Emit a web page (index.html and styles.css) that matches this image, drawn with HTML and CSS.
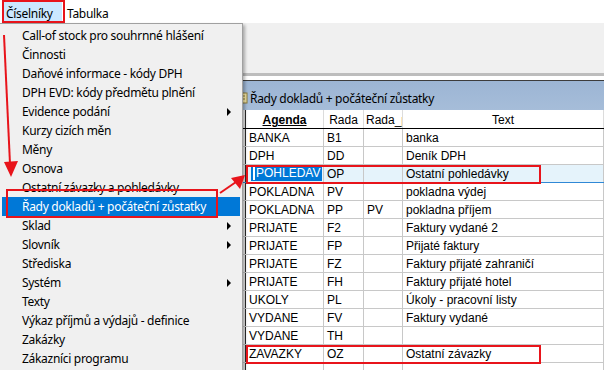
FILE: index.html
```html
<!DOCTYPE html>
<html lang="cs">
<head>
  <meta charset="UTF-8">
  <title>Řady dokladů + počáteční zůstatky</title>
  <link rel="stylesheet" href="styles.css">
</head>
<body>
  <div class="menubar">
    <span class="mb-item open">Číselníky</span>
    <span class="mb-item">Tabulka</span>
  </div>

  <div class="toolbar"></div>
  <div class="split"></div>

  <div class="mdi">
    <div class="win">
      <div class="titlebar">
        <svg class="win-icon" width="10" height="14" viewBox="0 0 10 14">
          <rect x="1" y="2" width="8" height="10" fill="#f4e7a8" stroke="#8a7a3a"/>
          <line x1="3" y1="5" x2="7" y2="5" stroke="#8a7a3a"/>
          <line x1="3" y1="8" x2="7" y2="8" stroke="#8a7a3a"/>
        </svg>
        <span class="win-title">Řady dokladů + počáteční zůstatky</span>
      </div>

      <div class="grid">
        <div class="row head">
          <div class="cell sel"></div>
          <div class="cell center"><b class="sorted">Agenda</b></div>
          <div class="cell center">Rada</div>
          <div class="cell clip">Rada_počát</div>
          <div class="cell center">Text</div>
        </div>
        <div class="row"><div class="cell sel"></div><div class="cell">BANKA</div><div class="cell">B1</div><div class="cell"></div><div class="cell">banka</div></div>
        <div class="row"><div class="cell sel"></div><div class="cell">DPH</div><div class="cell">DD</div><div class="cell"></div><div class="cell">Deník DPH</div></div>
        <div class="row current"><div class="cell sel"></div><div class="cell editing"><div class="edit">POHLEDAV</div></div><div class="cell">OP</div><div class="cell"></div><div class="cell">Ostatní pohledávky</div></div>
        <div class="row"><div class="cell sel"></div><div class="cell">POKLADNA</div><div class="cell">PV</div><div class="cell"></div><div class="cell">pokladna výdej</div></div>
        <div class="row"><div class="cell sel"></div><div class="cell">POKLADNA</div><div class="cell">PP</div><div class="cell">PV</div><div class="cell">pokladna příjem</div></div>
        <div class="row"><div class="cell sel"></div><div class="cell">PRIJATE</div><div class="cell">F2</div><div class="cell"></div><div class="cell">Faktury vydané 2</div></div>
        <div class="row"><div class="cell sel"></div><div class="cell">PRIJATE</div><div class="cell">FP</div><div class="cell"></div><div class="cell">Přijaté faktury</div></div>
        <div class="row"><div class="cell sel"></div><div class="cell">PRIJATE</div><div class="cell">FZ</div><div class="cell"></div><div class="cell">Faktury přijaté zahraničí</div></div>
        <div class="row"><div class="cell sel"></div><div class="cell">PRIJATE</div><div class="cell">FH</div><div class="cell"></div><div class="cell">Faktury přijaté hotel</div></div>
        <div class="row"><div class="cell sel"></div><div class="cell">UKOLY</div><div class="cell">PL</div><div class="cell"></div><div class="cell">Úkoly - pracovní listy</div></div>
        <div class="row"><div class="cell sel"></div><div class="cell">VYDANE</div><div class="cell">FV</div><div class="cell"></div><div class="cell">Faktury vydané</div></div>
        <div class="row"><div class="cell sel"></div><div class="cell">VYDANE</div><div class="cell">TH</div><div class="cell"></div><div class="cell"></div></div>
        <div class="row"><div class="cell sel"></div><div class="cell">ZAVAZKY</div><div class="cell">OZ</div><div class="cell"></div><div class="cell">Ostatní závazky</div></div>
        <div class="row"><div class="cell sel"></div><div class="cell"></div><div class="cell"></div><div class="cell"></div><div class="cell"></div></div>
      </div>
    </div>
  </div>

  <!-- rozbalené menu Číselníky -->
  <div class="dropdown">
    <div class="dd-item">Call-of stock pro souhrnné hlášení</div>
    <div class="dd-item">Činnosti</div>
    <div class="dd-item">Daňové informace - kódy DPH</div>
    <div class="dd-item">DPH EVD: kódy předmětu plnění</div>
    <div class="dd-item sub">Evidence podání</div>
    <div class="dd-item">Kurzy cizích měn</div>
    <div class="dd-item">Měny</div>
    <div class="dd-item">Osnova</div>
    <div class="dd-item">Ostatní závazky a pohledávky</div>
    <div class="dd-item active">Řady dokladů + počáteční zůstatky</div>
    <div class="dd-item sub">Sklad</div>
    <div class="dd-item sub">Slovník</div>
    <div class="dd-item">Střediska</div>
    <div class="dd-item sub">Systém</div>
    <div class="dd-item">Texty</div>
    <div class="dd-item">Výkaz příjmů a výdajů - definice</div>
    <div class="dd-item">Zakázky</div>
    <div class="dd-item">Zákazníci programu</div>
  </div>

  <!-- červené značky přes screenshot -->
  <svg class="annot" width="604" height="370" viewBox="0 0 604 370">
    <g fill="none" stroke="#e8141b" stroke-width="2">
      <rect x="3" y="1" width="61" height="21"/>
      <rect x="7" y="190" width="210" height="27"/>
      <rect x="247" y="166" width="293" height="17"/>
      <rect x="247" y="346" width="293" height="17"/>
      <line x1="4" y1="35" x2="10" y2="164"/>
      <line x1="220" y1="193" x2="236" y2="182"/>
    </g>
    <g fill="#e8141b">
      <polygon points="4,162 18,161 11,177"/>
      <polygon points="245,175 231,178 240,189"/>
    </g>
  </svg>
</body>
</html>
```

FILE: styles.css
```css
* {
  margin: 0;
  padding: 0;
  box-sizing: border-box;
}

body {
  width: 604px;
  height: 370px;
  overflow: hidden;
  position: relative;
  background: #fff;
  font-family: 'Noto Sans', sans-serif;
  font-size: 12px;
  color: #000;
}

.menubar {
  height: 23px;
  display: flex;
  padding: 2px 0 0 3px;
  letter-spacing: -0.3px;
}

.mb-item {
  height: 20px;
  line-height: 17px;
  padding: 3px 6px 0 5px;
}

.mb-item.open {
  width: 59px;
  padding-left: 3px;
  background: #cce8ff;
}

.toolbar {
  height: 50px;
  background: #f0f0f0;
}

.split {
  height: 3px;
  background: #bdbdbd;
}

.mdi {
  padding-top: 4px;
  background: #fff;
}

.win {
  margin-left: 236px;
  border-top: 1px solid #3c3c3c;
}

.titlebar {
  height: 29px;
  background: linear-gradient(#9cb5d4, #a6bdd9);
  display: flex;
  align-items: flex-end;
  padding: 0 0 3px 2px;
  gap: 2px;
  letter-spacing: -0.3px;
}

.win-icon {
  flex: none;
  margin-bottom: 2px;
}

.grid {
  font-family: 'Liberation Sans', Arial, sans-serif;
  font-size: 12px;
}

.row {
  display: grid;
  grid-template-columns: 10px 78px 40px 39px 1fr;
  height: 18px;
  border-bottom: 1px solid #c8c8c8;
}

.row.head {
  height: 19px;
  border-bottom: 1px solid #000;
}

.row.current {
  background: #e5f3fb;
  border-bottom-color: #2f88d6;
}

.cell {
  border-right: 1px solid #c8c8c8;
  padding: 2px 0 0 3px;
  line-height: 15px;
  white-space: nowrap;
  overflow: hidden;
}

.cell.sel {
  background: #ececec;
  border-right: 1px solid #2a2a2a;
  padding: 0;
}

.head .cell {
  border-right-color: #dcdcdc;
  padding-top: 3px;
}

.head .cell.sel {
  border-right-color: #2a2a2a;
  padding: 0;
}

.cell.center {
  text-align: center;
  padding-left: 0;
}

.cell.clip {
  padding-left: 2px;
}

.sorted {
  text-decoration: underline;
}

.cell.editing {
  padding: 1px 0 0 5px;
}

.edit {
  position: relative;
  height: 15px;
  width: 71px;
  line-height: 15px;
  padding-left: 5px;
  background-color: #0078d7;
  color: #fff;
}

.edit::before {
  content: "";
  position: absolute;
  left: 2px;
  top: 1px;
  bottom: 1px;
  width: 2px;
  background: #fff;
}

.dropdown {
  position: absolute;
  top: 23px;
  left: 0;
  width: 243px;
  height: 360px;
  padding-top: 2px;
  background: #f0f0f0;
  border-right: 1px solid #a0a0a0;
  border-top: 1px solid #a0a0a0;
  box-shadow: 2px 2px 3px rgba(0, 0, 0, 0.3);
  letter-spacing: -0.3px;
  z-index: 10;
}

.dd-item {
  position: relative;
  height: 19px;
  line-height: 19px;
  margin: 0 2px;
  padding-left: 20px;
  white-space: nowrap;
}

.dd-item.active {
  background: #0078d7;
  color: #fff;
}

.dd-item.sub::after {
  content: "";
  position: absolute;
  right: 9px;
  top: 6px;
  border-left: 4px solid #000;
  border-top: 4px solid transparent;
  border-bottom: 4px solid transparent;
}

.annot {
  position: absolute;
  top: 0;
  left: 0;
  z-index: 20;
  pointer-events: none;
}
```
